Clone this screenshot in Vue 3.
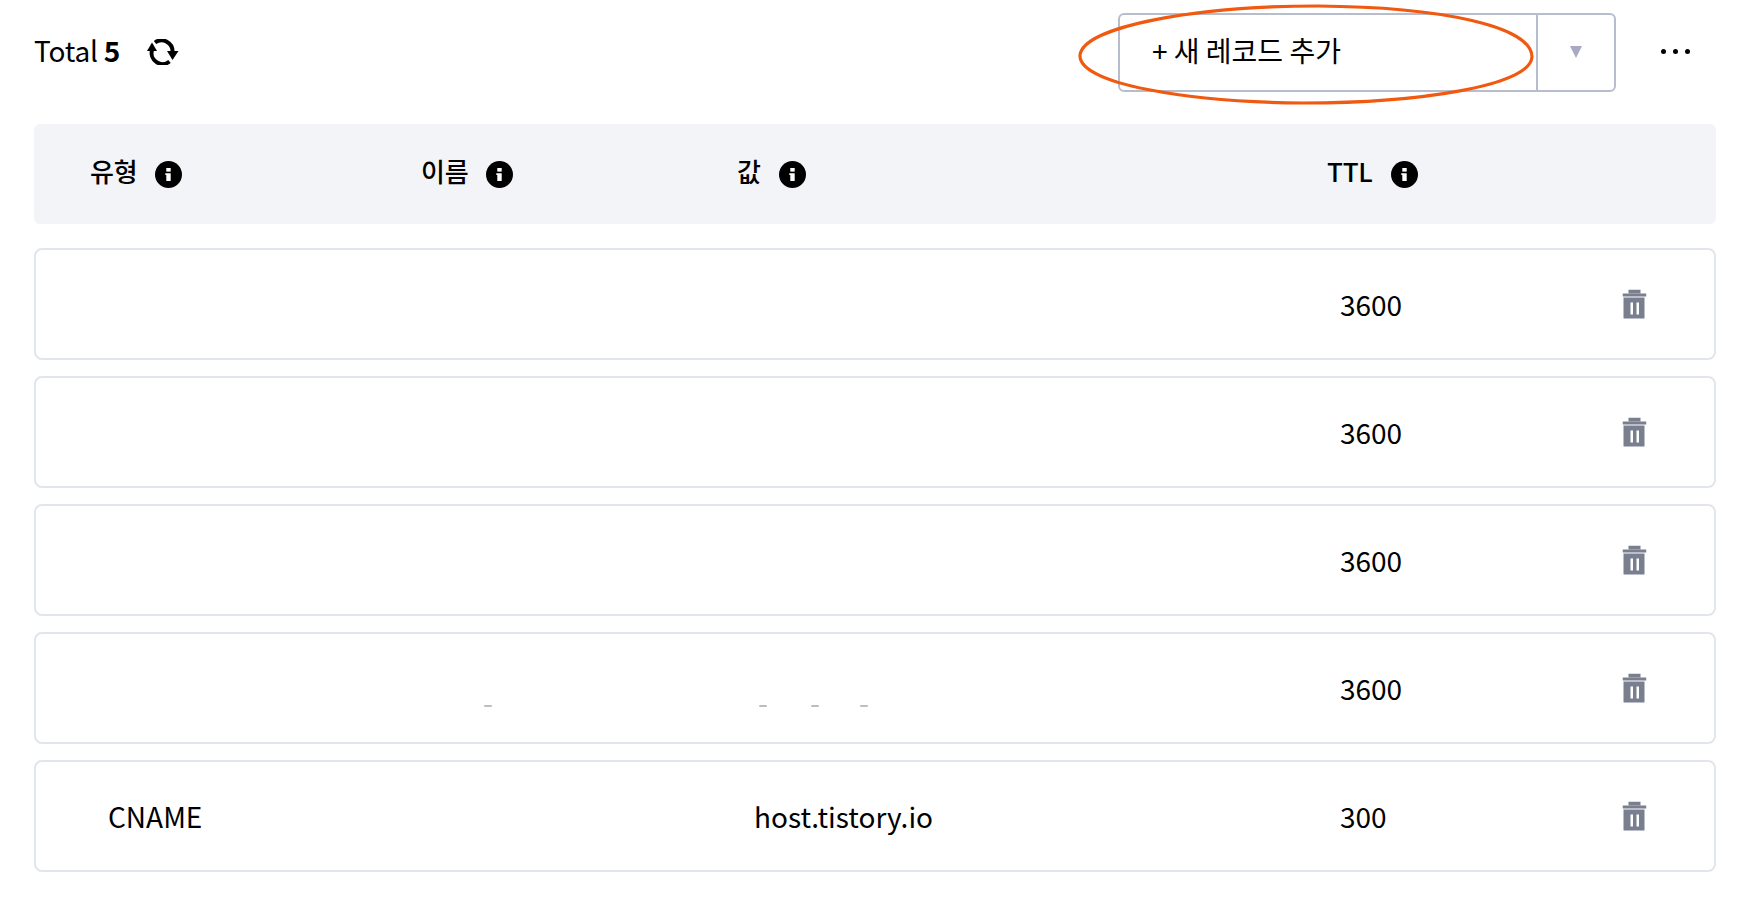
<script setup>
const columns = ['유형', '이름', '값', 'TTL']
const records = [
  { type: '', value: '', ttl: '3600' },
  { type: '', value: '', ttl: '3600' },
  { type: '', value: '', ttl: '3600' },
  { type: '', value: '', ttl: '3600', residue: true },
  { type: 'CNAME', value: 'host.tistory.io', ttl: '300' },
]
</script>

<template>
  <div class="page">
    <div class="toolbar">
      <div class="total">Total <b>5</b></div>
      <svg class="refresh" viewBox="0 0 32 26" aria-hidden="true">
        <path d="M5 11 A11 11 0 0 0 22.5 22.5" fill="none" stroke="#000" stroke-width="4" />
        <path d="M8 3.5 A11 11 0 0 1 25.5 13" fill="none" stroke="#000" stroke-width="4" />
        <path d="M0 12 L5 3.5 L10 12 Z" fill="#000" />
        <path d="M20 12 L31.5 12 L25.5 21 Z" fill="#000" />
      </svg>
      <div class="add-wrap">
        <div class="add">
          <div class="add-label"><span>+ 새 레코드 추가</span></div>
          <div class="add-caret"><span class="caret"></span></div>
        </div>
        <svg class="circle" viewBox="0 0 456 101" aria-hidden="true">
          <path d="M2 51 C6 22 120 2 240 2 C362 3 454 22 454 53 C452 82 340 99 225 99 C110 98 0 80 2 51 Z" fill="none" stroke="#f0590f" stroke-width="3.2" />
        </svg>
      </div>
      <div class="more"><i></i><i></i><i></i></div>
    </div>

    <div class="head">
      <div v-for="c in columns" :key="c" class="head-cell">
        <span class="head-label">{{ c }}</span>
        <svg class="info" viewBox="0 0 27 27" aria-hidden="true">
          <circle cx="13.5" cy="13.5" r="13.5" fill="#000" />
          <rect x="11.3" y="7" width="4.4" height="3.6" fill="#fff" />
          <path d="M10.3 12.2 H15.7 V20 H11.3 V14 H10.3 Z" fill="#fff" />
        </svg>
      </div>
    </div>

    <div class="rows">
      <div v-for="(r, i) in records" :key="i" class="row">
        <div>{{ r.type }}</div>
        <div></div>
        <div>{{ r.value }}</div>
        <div>{{ r.ttl }}</div>
        <svg class="trash" viewBox="0 0 24 30" aria-hidden="true">
          <rect x="6" y="0" width="12" height="4" fill="#7a7f8f" />
          <rect x="0" y="4" width="24" height="3" fill="#7a7f8f" />
          <path fill-rule="evenodd" d="M1 8 H22 V29 H1 Z M8 13 V25 H10.5 V13 Z M14 13 V25 H16.5 V13 Z" fill="#7a7f8f" />
        </svg>
        <template v-if="r.residue">
          <span class="dash d1"></span>
          <span class="dash d2"></span>
          <span class="dash d3"></span>
          <span class="dash d4"></span>
        </template>
      </div>
    </div>
  </div>
</template>

<style>
html, body { background: #fff; }
</style>

<style scoped>
.page {
  padding: 13px 34px 0;
  font-family: "Noto Sans CJK KR", "Noto Sans", sans-serif;
  font-size: 28px;
  color: #000;
}
.toolbar {
  display: flex;
  align-items: center;
  height: 79px;
  margin-bottom: 32px;
}
.total { white-space: pre; letter-spacing: -0.2px; transform: translateY(-3px); }
.total b { font-weight: 700; }
.refresh { width: 32px; height: 26px; margin-left: 27px; transform: translateY(-1px); }
.add-wrap { position: relative; margin-left: auto; }
.add {
  display: flex;
  width: 498px;
  height: 79px;
  box-sizing: border-box;
  border: 2px solid #b7bdcc;
  border-radius: 6px;
}
.add-label {
  flex: 1;
  display: flex;
  align-items: center;
  padding: 0 0 5px 32px;
}
.add-caret {
  width: 76px;
  border-left: 2px solid #b7bdcc;
  display: flex;
  align-items: center;
  justify-content: center;
}
.caret {
  width: 0;
  height: 0;
  margin-top: -2px;
  border-left: 6.5px solid transparent;
  border-right: 6.5px solid transparent;
  border-top: 12px solid #a9a9c4;
}
.circle {
  position: absolute;
  left: -40px;
  top: -9px;
  width: 456px;
  height: 101px;
  pointer-events: none;
}
.more {
  display: flex;
  gap: 7px;
  margin-left: 45px;
  margin-right: 26px;
  margin-top: -2px;
}
.more i {
  display: block;
  width: 5px;
  height: 5px;
  border-radius: 50%;
  background: #000;
}
.head {
  display: grid;
  grid-template-columns: 331px 316px 590px 1fr;
  align-items: center;
  height: 100px;
  padding-left: 56px;
  margin-bottom: 24px;
  background: #f3f4f8;
  border-radius: 6px;
}
.head-cell {
  display: flex;
  align-items: center;
  gap: 18px;
  font-size: 26px;
  font-weight: 500;
}
.head-label { margin-top: -8px; letter-spacing: -0.2px; }
.info { width: 27px; height: 27px; flex: none; }
.rows { display: flex; flex-direction: column; gap: 16px; }
.row {
  position: relative;
  display: grid;
  grid-template-columns: 313px 333px 586px 1fr 24px;
  align-items: center;
  height: 112px;
  box-sizing: border-box;
  padding: 0 68px 0 72px;
  border: 2px solid #e1e5ec;
  border-radius: 8px;
}
.trash { width: 24px; height: 30px; transform: translate(0.5px, 0.5px); }
.dash {
  position: absolute;
  top: 71px;
  width: 8px;
  height: 2px;
  background: #bdbdbd;
  border-radius: 1px;
}
.d1 { left: 448px; }
.d2 { left: 723px; }
.d3 { left: 775px; }
.d4 { left: 824px; }
</style>
